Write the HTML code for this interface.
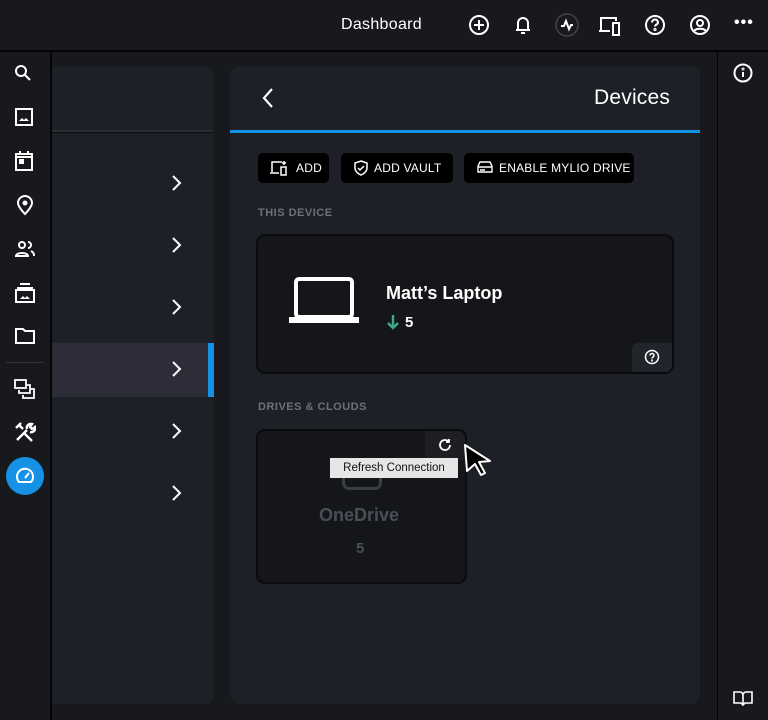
<!DOCTYPE html>
<html><head><meta charset="utf-8"><style>
*{margin:0;padding:0;box-sizing:border-box}
body{width:768px;height:720px;background:#18191d;font-family:"Liberation Sans",sans-serif;color:#fff;position:relative;overflow:hidden}
.abs{position:absolute}
svg{display:block}
.btn{position:absolute;top:153px;height:30px;background:#000;border-radius:5px;font-size:12px;display:flex;align-items:center;gap:5px;padding-left:12px;letter-spacing:.2px}
.lbl{position:absolute;font-size:11px;font-weight:bold;color:#6b707b;letter-spacing:.5px}
.chev{position:absolute;left:170px}
</style></head><body>
<div class="abs" style="left:0;top:50px;width:768px;height:2px;background:#050506"></div>
<div class="abs" style="left:50px;top:50px;width:2px;height:670px;background:#050506"></div>
<div class="abs" style="left:717px;top:50px;width:1px;height:670px;background:#050506"></div>
<div class="abs" style="left:341px;top:16px;font-size:16px;letter-spacing:.3px">Dashboard</div>
<svg class="abs" style="left:468px;top:14px" width="22" height="22" viewBox="0 0 22 22" fill="none" stroke="#fff" stroke-width="2"><circle cx="11" cy="11" r="9"/><path d="M11 6v10M6 11h10"/></svg>
<svg class="abs" style="left:513px;top:14px" width="20" height="22" viewBox="0 0 20 22" fill="none" stroke="#fff" stroke-width="2"><path d="M5 16V9a5 5 0 0110 0v7M3 16h14M8 19h4"/></svg>
<svg class="abs" style="left:555px;top:13px" width="24" height="24" viewBox="0 0 24 24" fill="none"><circle cx="12" cy="12" r="11" stroke="#444" stroke-width="1.5"/><path d="M6 13h3l2-5 3 8 2-4h2" stroke="#fff" stroke-width="2"/></svg>
<svg class="abs" style="left:598px;top:15px" width="26" height="22" viewBox="0 0 26 22" fill="none" stroke="#fff" stroke-width="2"><path d="M3 15V3h15v3M1 16h11"/><rect x="15" y="8" width="6" height="12"/></svg>
<svg class="abs" style="left:644px;top:14px" width="22" height="22" viewBox="0 0 22 22" fill="none" stroke="#fff" stroke-width="2"><circle cx="11" cy="11" r="9"/><path d="M8 8.5a3 3 0 116 0c0 2-3 2-3 4"/><circle cx="11" cy="15.5" r=".6"/></svg>
<svg class="abs" style="left:689px;top:14px" width="22" height="22" viewBox="0 0 22 22" fill="none" stroke="#fff" stroke-width="2"><circle cx="11" cy="11" r="9"/><circle cx="11" cy="9" r="3"/><path d="M5 17c2-3 10-3 12 0"/></svg>
<div class="abs" style="left:734px;top:14px;font-size:16px;font-weight:bold;letter-spacing:1px">•••</div>

<svg class="abs" style="left:13px;top:63px" width="20" height="20" viewBox="0 0 20 20" fill="none" stroke="#fff" stroke-width="2"><circle cx="8" cy="8" r="5"/><path d="M12 12l5 5"/></svg>
<svg class="abs" style="left:15px;top:107px" width="20" height="20" viewBox="0 0 20 20" fill="none" stroke="#fff" stroke-width="2"><rect x="1" y="2" width="16" height="16"/><path d="M4 14l3-3 2 2 2-2 3 3z" fill="#fff" stroke="none"/></svg>
<svg class="abs" style="left:15px;top:150px" width="20" height="22" viewBox="0 0 20 22" fill="none" stroke="#fff" stroke-width="2"><rect x="1" y="4" width="16" height="16"/><path d="M5 1v4M13 1v4M1 7h16" /><rect x="5" y="10" width="3" height="3" fill="#fff"/></svg>
<svg class="abs" style="left:16px;top:194px" width="18" height="22" viewBox="0 0 18 22" fill="none" stroke="#fff" stroke-width="2"><path d="M9 20s-7-7-7-11a7 7 0 0114 0c0 4-7 11-7 11z"/><circle cx="9" cy="9" r="1.5" fill="#fff"/></svg>
<svg class="abs" style="left:14px;top:240px" width="22" height="18" viewBox="0 0 22 18" fill="none" stroke="#fff" stroke-width="2"><circle cx="8" cy="5" r="3"/><path d="M2 16c0-4 12-4 12 0z"/><path d="M14 2a3 3 0 010 6M17 11c2 1 3 2 3 5"/></svg>
<svg class="abs" style="left:14px;top:282px" width="22" height="22" viewBox="0 0 22 22" fill="none" stroke="#fff" stroke-width="2"><path d="M6 2h10M3 6h16"/><rect x="2" y="8" width="18" height="12"/><path d="M6 17l3-3 2 2 2-2 3 3z" fill="#fff" stroke="none"/></svg>
<svg class="abs" style="left:15px;top:327px" width="20" height="18" viewBox="0 0 20 18" fill="none" stroke="#fff" stroke-width="2"><path d="M1 2h7l2 2h9v12H1z"/></svg>
<div class="abs" style="left:6px;top:362px;width:38px;height:1px;background:#333"></div>
<svg class="abs" style="left:14px;top:379px" width="22" height="20" viewBox="0 0 22 20" fill="none" stroke="#fff" stroke-width="1.8"><rect x="1" y="1" width="11" height="8"/><path d="M5 11v3h11V6h-3M9 16v3h11v-9h-3"/></svg>
<svg class="abs" style="left:14px;top:421px" width="22" height="22" viewBox="0 0 22 22" fill="none" stroke="#fff" stroke-width="2.4"><path d="M3 19l10-10M5 4l4 4M2 7l5-5M10 12l8 8M13 8a4 4 0 015-5l-2 3 2 2 3-2a4 4 0 01-5 5"/></svg>
<div class="abs" style="left:6px;top:457px;width:38px;height:38px;border-radius:50%;background:#1592e6"></div>
<svg class="abs" style="left:15px;top:466px" width="20" height="20" viewBox="0 0 20 20" fill="none" stroke="#fff" stroke-width="2"><path d="M4 16a8 8 0 1112 0z"/><path d="M10 12l4-5"/></svg>
<svg class="abs" style="left:733px;top:63px" width="20" height="20" viewBox="0 0 20 20" fill="none" stroke="#fff" stroke-width="2"><circle cx="10" cy="10" r="8.5"/><path d="M10 9v5"/><circle cx="10" cy="6" r=".5"/></svg>
<svg class="abs" style="left:732px;top:690px" width="22" height="16" viewBox="0 0 22 16" fill="none" stroke="#fff" stroke-width="1.6"><path d="M11 3v12M2 2h6a3 3 0 013 3 3 3 0 013-3h6v11h-7l-2 2-2-2H2z"/></svg>

<div class="abs" style="left:52px;top:66px;width:162px;height:638px;background:#1e2028;border-radius:0 10px 10px 0;overflow:hidden">
 <div class="abs" style="left:0;top:64px;width:162px;height:2px;background:#2a2e33"></div>
 <div class="abs" style="left:0;top:66px;width:162px;height:1px;background:#0c0d0f"></div>
 <div class="abs" style="left:0;top:277px;width:156px;height:54px;background:#2c2d38"></div>
 <div class="abs" style="left:156px;top:277px;width:6px;height:54px;background:#1592e6"></div>
</div>
<svg class="chev" style="top:175px" width="12" height="16" viewBox="0 0 12 16" fill="none" stroke="#fff" stroke-width="2"><path d="M3 1l7 7-7 7"/></svg>
<svg class="chev" style="top:237px" width="12" height="16" viewBox="0 0 12 16" fill="none" stroke="#fff" stroke-width="2"><path d="M3 1l7 7-7 7"/></svg>
<svg class="chev" style="top:299px" width="12" height="16" viewBox="0 0 12 16" fill="none" stroke="#fff" stroke-width="2"><path d="M3 1l7 7-7 7"/></svg>
<svg class="chev" style="top:361px" width="12" height="16" viewBox="0 0 12 16" fill="none" stroke="#fff" stroke-width="2"><path d="M3 1l7 7-7 7"/></svg>
<svg class="chev" style="top:423px" width="12" height="16" viewBox="0 0 12 16" fill="none" stroke="#fff" stroke-width="2"><path d="M3 1l7 7-7 7"/></svg>
<svg class="chev" style="top:485px" width="12" height="16" viewBox="0 0 12 16" fill="none" stroke="#fff" stroke-width="2"><path d="M3 1l7 7-7 7"/></svg>

<div class="abs" style="left:230px;top:66px;width:470px;height:638px;background:#1e2028;border-radius:10px"></div>
<div class="abs" style="left:230px;top:130px;width:470px;height:3px;background:#1592e6"></div>
<svg class="abs" style="left:261px;top:87px" width="14" height="22" viewBox="0 0 14 22" fill="none" stroke="#fff" stroke-width="2.2"><path d="M11 2l-8 9 8 9"/></svg>
<div class="abs" style="left:594px;top:86px;font-size:21px;letter-spacing:.2px">Devices</div>

<div class="btn" style="left:258px;width:71px;padding-left:11px"><svg width="22" height="16" viewBox="0 0 22 16" fill="none" stroke="#fff" stroke-width="1.5"><path d="M3 12V2h10M1 13h9"/><rect x="12" y="7" width="5" height="8"/><path d="M15 1v4M13 3h4"/></svg>ADD</div>
<div class="btn" style="left:341px;width:112px"><svg width="16" height="16" viewBox="0 0 16 16" fill="none" stroke="#fff" stroke-width="1.5"><path d="M8 1l6 2v5c0 3-3 6-6 7-3-1-6-4-6-7V3z"/><path d="M5 8l2 2 4-4"/></svg>ADD VAULT</div>
<div class="btn" style="left:464px;width:170px"><svg width="18" height="16" viewBox="0 0 18 16" fill="none" stroke="#fff" stroke-width="1.4"><path d="M2 12V6l2-4h10l2 4v6zM2 7h14M4 10h5"/></svg>ENABLE MYLIO DRIVE</div>

<div class="lbl" style="left:258px;top:207px">THIS DEVICE</div>
<div class="abs" style="left:256px;top:234px;width:418px;height:140px;background:#151619;border:2px solid #0b0b0d;border-radius:9px"></div>
<svg class="abs" style="left:289px;top:276px" width="70" height="48" viewBox="0 0 70 48" fill="none"><rect x="7" y="3" width="56" height="38" rx="3" stroke="#fff" stroke-width="4"/><rect x="0" y="41" width="70" height="6" fill="#fff"/></svg>
<div class="abs" style="left:386px;top:283px;font-size:18px;font-weight:bold">Matt’s Laptop</div>
<svg class="abs" style="left:386px;top:314px" width="14" height="16" viewBox="0 0 14 16" fill="none" stroke="#3aab88" stroke-width="2.4"><path d="M7 1v13M2 9l5 5 5-5"/></svg>
<div class="abs" style="left:405px;top:314px;font-size:15px;font-weight:bold">5</div>
<div class="abs" style="left:632px;top:343px;width:40px;height:29px;background:#22242b;border-radius:6px 0 7px 0"></div>
<svg class="abs" style="left:644px;top:349px" width="16" height="16" viewBox="0 0 16 16" fill="none" stroke="#fff" stroke-width="1.5"><circle cx="8" cy="8" r="6.5"/><path d="M6 6.5a2 2 0 114 0c0 1.5-2 1.5-2 3"/><circle cx="8" cy="11.5" r=".4"/></svg>

<div class="lbl" style="left:258px;top:401px">DRIVES &amp; CLOUDS</div>
<div class="abs" style="left:256px;top:429px;width:211px;height:155px;background:#151619;border:2px solid #0b0b0d;border-radius:9px"></div>
<div class="abs" style="left:425px;top:431px;width:40px;height:29px;background:#1d1f24;border-radius:0 7px 0 6px"></div>
<svg class="abs" style="left:438px;top:438px" width="14" height="14" viewBox="0 0 14 14" fill="none" stroke="#fff" stroke-width="1.8"><path d="M12 7a5 5 0 11-2-4M11 1v3H8"/></svg>
<div class="abs" style="left:342px;top:468px;width:40px;height:22px;border:3px solid #3a3d44;border-radius:7px;border-top:none"></div>
<div class="abs" style="left:330px;top:458px;width:128px;height:20px;background:#e6e6e6;color:#111;font-size:11.5px;text-align:center;line-height:20px">Refresh Connection</div>
<div class="abs" style="left:319px;top:505px;font-size:18px;font-weight:bold;color:#4a4e57">OneDrive</div>
<div class="abs" style="left:356px;top:540px;font-size:15px;font-weight:bold;color:#4a4e57">5</div>
<svg class="abs" style="left:462px;top:443px" width="34" height="34" viewBox="0 0 34 34"><path d="M3 2l25 16-11 1 6 11-4 2-6-11-8 7z" fill="#000" stroke="#fff" stroke-width="2" stroke-linejoin="round"/></svg>
</body></html>
